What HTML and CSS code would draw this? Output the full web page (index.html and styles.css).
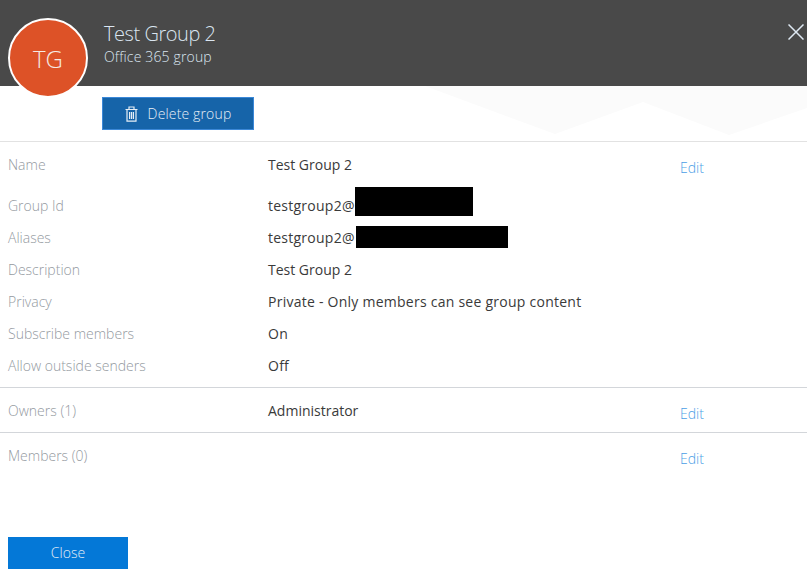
FILE: index.html
```html
<!DOCTYPE html>
<html lang="en">
<head>
<meta charset="utf-8">
<title>Test Group 2</title>
<link rel="stylesheet" href="styles.css">
</head>
<body>
<div class="panel">
  <header class="banner">
    <div class="avatar">TG</div>
    <div class="titles">
      <h1 class="title">Test Group 2</h1>
      <p class="subtitle">Office 365 group</p>
    </div>
    <svg class="close-x" viewBox="0 0 16 16" width="16" height="16"><path d="M.5.5l15 15M15.5.5l-15 15" fill="none" stroke="#dfe9f3" stroke-width="1.5"/></svg>
  </header>
  <div class="actions">
    <svg class="backdrop" viewBox="0 0 807 54" width="807" height="54"><path d="M425 0L555 48 643 16 729 49 807 22V0z" fill="#fbfbfb"/></svg>
    <button class="delete">
      <svg viewBox="0 0 13 16" width="13" height="16"><path d="M.5 3.5h12M4 3.5V1h5v2.5M2 3.5V15.2h9V3.5M4.6 6v7M6.5 6v7M8.4 6v7" fill="none" stroke="#e6eef6" stroke-width="1.2"/></svg>
      <span>Delete group</span>
    </button>
  </div>
  <section class="section first">
    <div class="row name-row"><span class="label">Name</span><span class="value tight">Test Group 2</span><a class="edit">Edit</a></div>
    <div class="row"><span class="label">Group Id</span><span class="value">testgroup2@<i class="redact r1"></i></span></div>
    <div class="row"><span class="label">Aliases</span><span class="value">testgroup2@<i class="redact r2"></i></span></div>
    <div class="row"><span class="label">Description</span><span class="value tight">Test Group 2</span></div>
    <div class="row"><span class="label">Privacy</span><span class="value">Private - Only members can see group content</span></div>
    <div class="row"><span class="label">Subscribe members</span><span class="value">On</span></div>
    <div class="row"><span class="label">Allow outside senders</span><span class="value">Off</span></div>
  </section>
  <section class="section">
    <div class="row lower-row"><span class="label">Owners (1)</span><span class="value tight">Administrator</span><a class="edit">Edit</a></div>
  </section>
  <section class="section last">
    <div class="row lower-row"><span class="label">Members (0)</span><span class="value"></span><a class="edit">Edit</a></div>
  </section>
  <button class="close">Close</button>
</div>
</body>
</html>
```
FILE: styles.css
```css
html, body { margin: 0; padding: 0; }
body { width: 807px; height: 570px; overflow: hidden; background: #fff; font-family: "Open Sans", "Noto Sans", sans-serif; }
.panel { display: flex; flex-direction: column; height: 570px; }
.banner { height: 86px; background: #494949; display: flex; position: relative; padding-left: 8px; box-sizing: border-box; }
.avatar { width: 76px; height: 76px; margin-top: 18px; border: 2px solid #fff; border-radius: 50%; background: #dd5227; color: #f6e9e2; font-size: 24px; font-weight: 300; display: flex; align-items: center; justify-content: center; flex: none; position: relative; z-index: 1; }
.titles { margin: 21px 0 0 16px; color: #dbe6f1; }
.title { margin: 0; font-size: 20px; font-weight: 300; line-height: 26px; letter-spacing: -.45px; }
.subtitle { margin: 0; font-size: 14px; line-height: 20px; font-weight: 300; letter-spacing: .15px; }
.close-x { position: absolute; left: 788px; top: 24px; }
.actions { height: 56px; box-sizing: border-box; padding: 11px 0 0 102px; border-bottom: 1px solid #e2e2e2; background: #fff; position: relative; }
.backdrop { position: absolute; left: 0; top: 0; }
.delete { position: relative; width: 152px; height: 33px; background: #1664a9; border: 1px solid #3b88d8; color: #e6eef6; font: inherit; font-size: 14px; font-weight: 300; letter-spacing: .15px; display: flex; align-items: center; justify-content: center; gap: 10px; padding: 0; }
.section { border-bottom: 1px solid #d3d6da; padding: 0 0 0 8px; }
.section.first { padding-top: 7px; padding-bottom: 5px; }
.section.last { border-bottom: 0; flex: 1; }
.row { display: flex; font-size: 14px; line-height: 32px; height: 32px; }
.section.first .name-row { height: 41px; }
.lower-row { height: 44px; padding-top: 7px; box-sizing: border-box; }
.label { width: 260px; color: #949a9f; flex: none; font-weight: 300; }
.value { width: 412px; color: #3a3a3a; flex: none; letter-spacing: .25px; }
.value.tight { letter-spacing: 0; }
.edit { color: #4a9ee6; line-height: 38px; font-weight: 300; }
.redact { display: inline-block; position: relative; background: #000; vertical-align: middle; }
.r1 { width: 118px; height: 29px; top: -6px; }
.r2 { width: 152px; height: 22px; top: -2px; left: 1px; }
.close { margin: 0 0 1px 8px; width: 120px; height: 32px; background: #0478d7; border: 0; color: #e6eef6; font: inherit; font-size: 14px; font-weight: 300; padding: 0 0 2px; }
```
